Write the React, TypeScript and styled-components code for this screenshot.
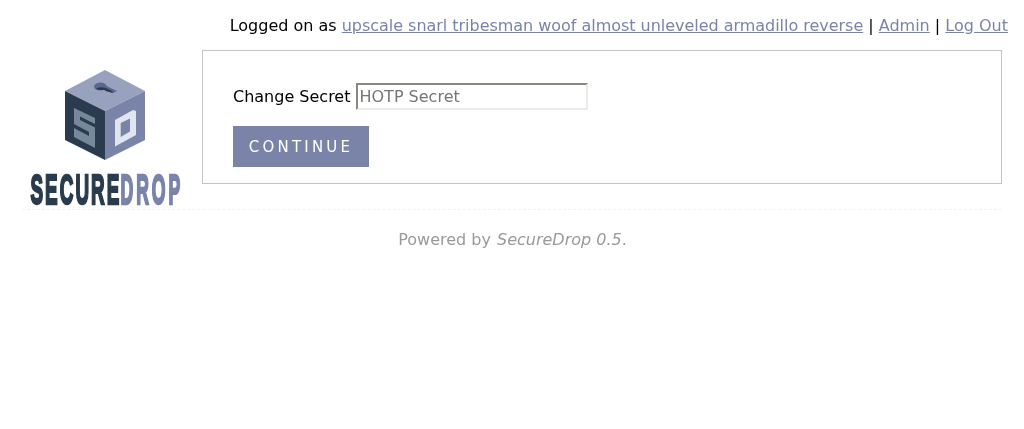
import React from "react";
import styled, { createGlobalStyle } from "styled-components";

const Global = createGlobalStyle`
  html, body { margin: 0; padding: 0; background: #fff; }
  body { font-family: "DejaVu Sans", sans-serif; font-size: 16px; color: #000; }
`;

const Page = styled.div`
  width: 1024px;
  height: 429px;
  overflow: hidden;
  box-sizing: border-box;
  padding: 16px 16px 0 22px;
  will-change: transform;
`;

const TopBar = styled.div`
  height: 34px;
  line-height: 19px;
  text-align: right;
  white-space: nowrap;
`;

const Link = styled.a`
  color: #7a84a9;
  text-decoration: underline;
`;

const UserLink = styled(Link)`
  letter-spacing: -0.03px;
`;

const Main = styled.div`
  display: flex;
  align-items: flex-start;
  padding-right: 6px;
  height: 134px;
`;

const LogoBox = styled.div`
  width: 180px;
  flex: none;
  padding-top: 20px;
`;

const LogoSvg = styled.svg`
  display: block;
`;

const Panel = styled.div`
  flex: 1;
  height: 134px;
  box-sizing: border-box;
  border: 1px solid #c4c4c4;
  padding: 32px 30px 0;
`;

const Row = styled.div`
  display: flex;
  align-items: center;
  height: 27px;
`;

const Label = styled.label`
  margin-right: 6px;
  white-space: nowrap;
`;

const Input = styled.input`
  width: 232px;
  height: 27px;
  box-sizing: border-box;
  padding: 1px 1px;
  border: 2px solid #ecebe7;
  border-top-color: #8a877d;
  border-left-color: #8a877d;
  font: 16px "DejaVu Sans", sans-serif;
  background: #fff;
  outline: none;
  &::placeholder { color: #757575; opacity: 1; }
`;

const Button = styled.button`
  display: block;
  margin-top: 16px;
  width: 136px;
  height: 41px;
  border: 0;
  padding: 0;
  background: #7a84a9;
  color: #fff;
  font: 15px "DejaVu Sans", sans-serif;
  letter-spacing: 3.2px;
`;

const Divider = styled.div`
  margin-top: 25px;
  margin-right: 6px;
  border-top: 1px dashed #f3f3f3;
`;

const Footer = styled.p`
  margin: 20px 0 0;
  line-height: 19px;
  text-align: center;
  color: #9a9a9a;
  padding-right: 5px;
`;

const FooterEm = styled.em`
  margin-left: 1px;
`;

const Logo = () => (
  <LogoSvg width="180" height="160" viewBox="22 70 180 160" aria-label="SecureDrop logo">
    <polygon points="105,70 145,91 105,111 65,91" fill="#98a2bf" />
    <polygon points="65,91 105,111 105,160 65,140" fill="#2a3b4e" />
    <polygon points="145,91 105,111 105,160 145,140" fill="#7a84a9" />
    <path d="M94,87 q0,-4 6,-4.500 q6,0 6.500,3.500 l10.500,5 l-4,2 l-7,-2 q-1,-1 -2,-1 q-9,1.500 -10,-3z" fill="#5a6890" />
    <path d="M96,88.500 q5,-2 10,-0.500 l6,3 l1,2 l-7,-2 q-1,-1 -2,-1 q-6,0.500 -8,-1.500z" fill="#2a3b4e" />
    <polygon points="74,108 95,118 95,148 74,137" fill="#75899b" />
    <polygon points="80,116.500 95,124 95,127.500 80,120" fill="#2a3b4e" />
    <polygon points="74,124 89,132 89,136 74,128" fill="#2a3b4e" />
    <path fillRule="evenodd" d="M115,120 L133,110 L136,111 V135 L115,146.500Z M120.700,123 V137 L130,131.500 V118.500Z" fill="#e0e5f1" />
    <text transform="translate(30.500 203.500) scale(.45 1)" fontFamily="Liberation Sans, sans-serif" fontWeight="700" fontSize="42" letterSpacing="4.500" stroke="#2a3b4e" strokeWidth="2.500" fill="#2a3b4e">SECURE</text>
    <text transform="translate(120.500 203.500) scale(.42 1)" fontFamily="Liberation Sans, sans-serif" fontWeight="700" fontSize="42" letterSpacing="7" stroke="#7a84a9" strokeWidth="2.500" fill="#7a84a9">DROP</text>
  </LogoSvg>
);

export default function App() {
  return (
    <Page>
      <Global />
      <TopBar>
        Logged on as <UserLink href="#">upscale snarl tribesman woof almost unleveled armadillo reverse</UserLink> | <Link href="#">Admin</Link> | <Link href="#">Log Out</Link>
      </TopBar>
      <Main>
        <LogoBox><Logo /></LogoBox>
        <Panel>
          <Row>
            <Label>Change Secret</Label>
            <Input placeholder="HOTP Secret" />
          </Row>
          <Button>CONTINUE</Button>
        </Panel>
      </Main>
      <Divider />
      <Footer>Powered by <FooterEm>SecureDrop 0.5</FooterEm>.</Footer>
    </Page>
  );
}
